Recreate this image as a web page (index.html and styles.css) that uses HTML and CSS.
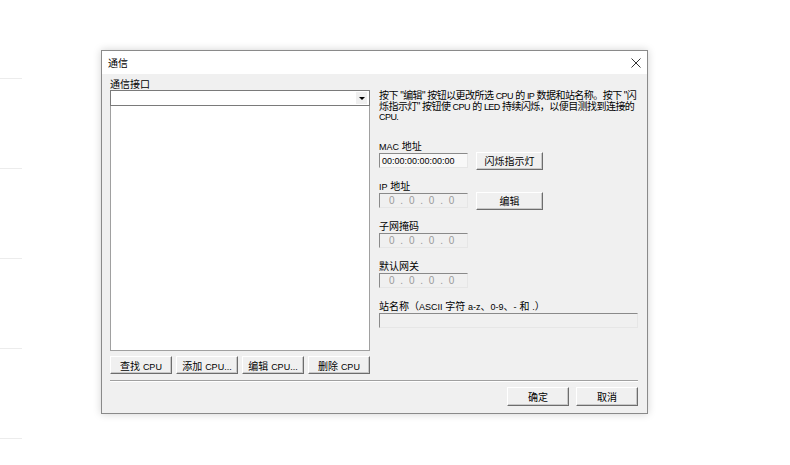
FILE: index.html
```html
<!DOCTYPE html>
<html lang="zh-CN">
<head>
    <meta charset="UTF-8">
    <link rel="stylesheet" href="styles.css">
    <title>通信</title>
</head>
<body>
    <div class="dialog">
        <div class="title-bar">
            <span class="title">通信</span>
            <svg class="close" width="10" height="10" viewBox="0 0 10 10">
                <path d="M0.5 0.5 L9.5 9.5 M9.5 0.5 L0.5 9.5" stroke="#333" stroke-width="1" fill="none"/>
            </svg>
        </div>
        <div class="dialog-body">
            <div class="content">
                <div class="left-col">
                    <div class="label">通信接口</div>
                    <div class="combo"><span class="combo-arrow"></span></div>
                    <div class="list-box"></div>
                    <div class="cpu-buttons">
                        <button class="btn">查找 <span class="en">CPU</span></button>
                        <button class="btn">添加 <span class="en">CPU...</span></button>
                        <button class="btn">编辑 <span class="en">CPU...</span></button>
                        <button class="btn">删除 <span class="en">CPU</span></button>
                    </div>
                </div>
                <div class="right-col">
                    <p class="hint">按下 "编辑" 按钮以更改所选 <span class="en">CPU</span> 的 <span class="en">IP</span> 数据和站名称。按下 "闪烁指示灯" 按钮使 <span class="en">CPU</span> 的 <span class="en">LED</span> 持续闪烁，以便目测找到连接的 <span class="en">CPU.</span></p>
                    <div class="group">
                        <div class="label"><span class="en">MAC</span> 地址</div>
                        <div class="row">
                            <div class="field mac"><span class="en">00:00:00:00:00:00</span></div>
                            <button class="btn side-btn">闪烁指示灯</button>
                        </div>
                    </div>
                    <div class="group">
                        <div class="label"><span class="en">IP</span> 地址</div>
                        <div class="row">
                            <div class="field ip">0 . 0 . 0 . 0</div>
                            <button class="btn side-btn">编辑</button>
                        </div>
                    </div>
                    <div class="group">
                        <div class="label">子网掩码</div>
                        <div class="row">
                            <div class="field ip">0 . 0 . 0 . 0</div>
                        </div>
                    </div>
                    <div class="group">
                        <div class="label">默认网关</div>
                        <div class="row">
                            <div class="field ip">0 . 0 . 0 . 0</div>
                        </div>
                    </div>
                    <div class="group">
                        <div class="label">站名称（<span class="en">ASCII</span> 字符 <span class="en">a-z</span>、<span class="en">0-9</span>、<span class="en">-</span> 和 <span class="en">.</span>）</div>
                        <div class="row">
                            <div class="field wide"></div>
                        </div>
                    </div>
                </div>
            </div>
            <div class="separator"></div>
            <div class="footer">
                <button class="btn footer-btn">确定</button>
                <button class="btn footer-btn">取消</button>
            </div>
        </div>
    </div>
</body>
</html>
```

FILE: styles.css
```css
body {
    margin: 0;
    background-color: #fff;
    background-image: linear-gradient(to bottom, #ececec 0, #ececec 1px, transparent 1px);
    background-size: 22px 90px;
    background-position: 0 78px;
    background-repeat: repeat-y;
    font-family: "Liberation Sans", "Noto Sans CJK SC", sans-serif;
    font-size: 10px;
    color: #000;
    height: 100vh;
}

.en {
    font-size: 9px;
}

.dialog {
    box-sizing: border-box;
    width: 547px;
    height: 364px;
    margin: 50px 0 0 101px;
    border: 1px solid #8a8a8a;
    background-color: #f0f0f0;
    box-shadow: 0 0 8px rgba(0, 0, 0, 0.18);
    display: flex;
    flex-direction: column;
}

.title-bar {
    height: 23px;
    background-color: #fff;
    display: flex;
    align-items: center;
    justify-content: space-between;
    padding: 0 6px 0 6px;
}

.title {
    font-size: 10px;
}

.dialog-body {
    padding: 6px 9px 0 8px;
}

.content {
    display: flex;
    gap: 9px;
}

.left-col {
    width: 260px;
    display: flex;
    flex-direction: column;
}

.label {
    height: 10px;
    line-height: 10px;
    white-space: nowrap;
}

.combo {
    box-sizing: border-box;
    height: 16px;
    background-color: #fff;
    border: 1px solid #7a7a7a;
    position: relative;
}

.combo-arrow {
    position: absolute;
    right: 2px;
    top: 1px;
    width: 11px;
    height: 12px;
    background-color: #f0f0f0;
}

.combo-arrow::after {
    content: "";
    position: absolute;
    left: 3px;
    top: 5px;
    border-left: 3px solid transparent;
    border-right: 3px solid transparent;
    border-top: 3px solid #000;
}

.list-box {
    box-sizing: border-box;
    height: 245px;
    background-color: #fff;
    border: 1px solid #a0a0a0;
    border-top: none;
}

.cpu-buttons {
    display: flex;
    gap: 4px;
    margin-top: 5px;
}

.btn {
    box-sizing: border-box;
    height: 18px;
    padding: 0;
    background-color: #f0f0f0;
    border: 1px solid;
    border-color: #fff #6d6d6d #6d6d6d #fff;
    box-shadow: inset -1px -1px 0 #c8c8c8;
    font-family: inherit;
    font-size: 10px;
    color: #000;
}

.cpu-buttons .btn {
    flex: 1;
}

.right-col {
    width: 259px;
    padding-top: 11px;
    display: flex;
    flex-direction: column;
}

.hint {
    margin: 0 0 19px;
    line-height: 10.5px;
    letter-spacing: -0.55px;
}

.group {
    margin-bottom: 12px;
}

.row {
    height: 18px;
    display: flex;
    align-items: center;
    gap: 8px;
}

.field {
    box-sizing: border-box;
    width: 89px;
    height: 15px;
    line-height: 13px;
    border: 1px solid;
    border-color: #8a8a8a #e6e6e6 #e6e6e6 #8a8a8a;
    padding-left: 2px;
    white-space: nowrap;
    overflow: hidden;
}

.mac {
    background-color: #f8f8f8;
}

.ip {
    color: #9a9a9a;
    padding-left: 9px;
    word-spacing: 3px;
}

.wide {
    width: 259px;
}

.side-btn {
    width: 67px;
}

.separator {
    height: 1px;
    background-color: #a0a0a0;
    border-bottom: 1px solid #fff;
    margin-top: 6px;
}

.footer {
    display: flex;
    justify-content: flex-end;
    gap: 7px;
    padding-top: 5px;
}

.footer-btn {
    width: 62px;
    height: 19px;
}
```
